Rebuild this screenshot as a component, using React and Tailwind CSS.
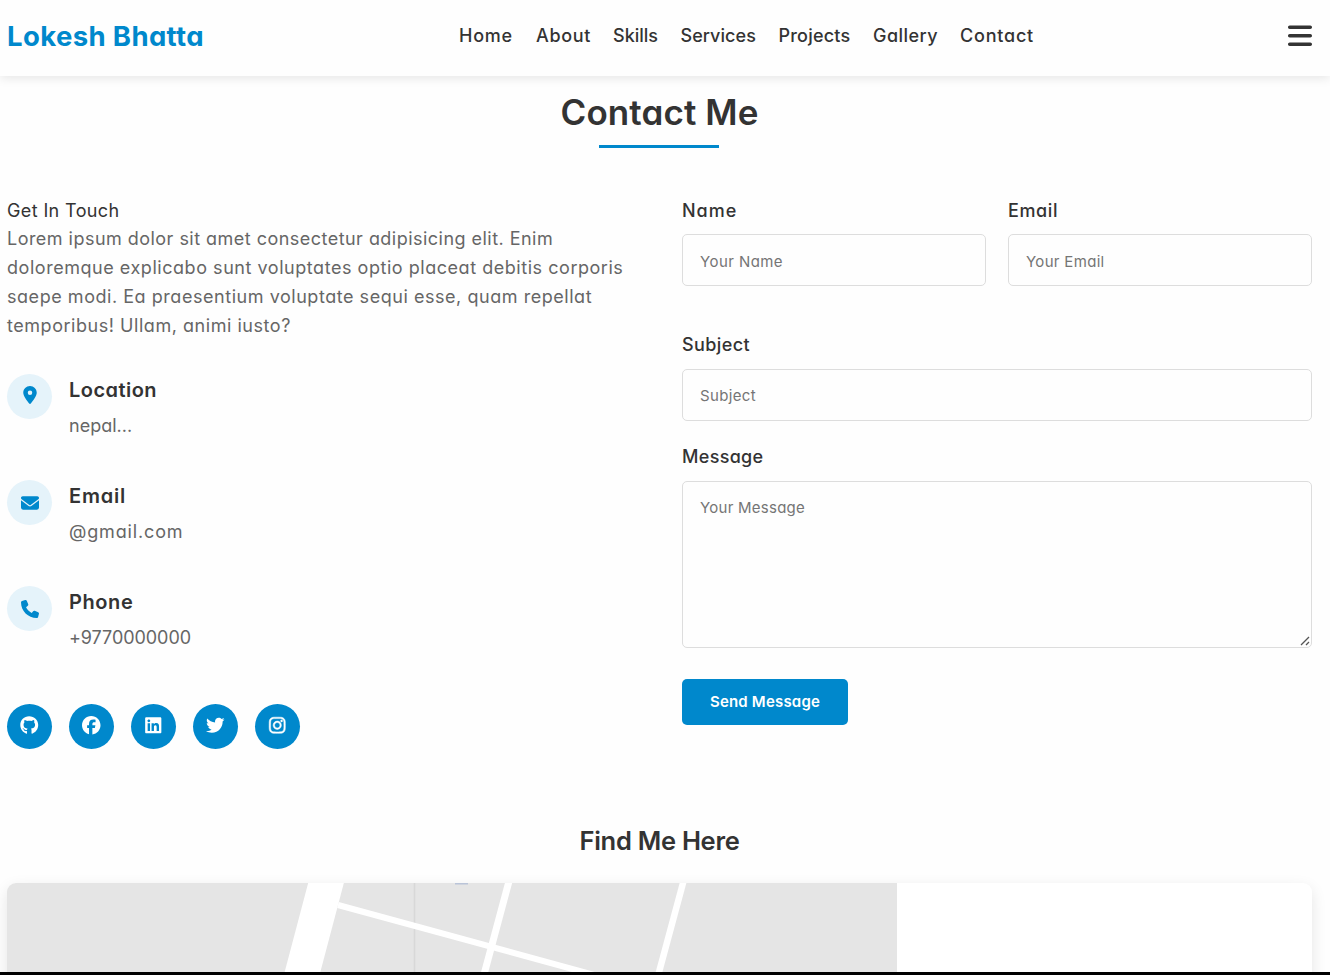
import React from "react";
import {
  FaBars,
  FaEnvelope,
  FaFacebook,
  FaGithub,
  FaInstagram,
  FaLinkedin,
  FaLocationDot,
  FaPhone,
  FaTwitter,
} from "react-icons/fa6";

const navLinks = [
  { label: "Home", className: "w-[54.5px] tracking-[0.75px]" },
  { label: "About", className: "w-[54.5px] tracking-[0.65px]" },
  { label: "Skills", className: "w-[45px]" },
  { label: "Services", className: "w-[75.5px] tracking-[0.06px]" },
  { label: "Projects", className: "w-[72px] tracking-[0.22px]" },
  { label: "Gallery", className: "w-[64.5px] tracking-[0.45px]" },
  { label: "Contact", className: "w-[74px] tracking-[0.78px]" },
];

const details = [
  { title: "Location", value: "nepal...", Icon: FaLocationDot, titleClass: "tracking-[0.46px]", valueClass: "", iconClass: "mb-[3px]" },
  { title: "Email", value: "@gmail.com", Icon: FaEnvelope, titleClass: "tracking-[0.78px]", valueClass: "tracking-[0.85px]", iconClass: "" },
  { title: "Phone", value: "+9770000000", Icon: FaPhone, titleClass: "tracking-[0.6px]", valueClass: "tracking-[-0.06px]", iconClass: "" },
];

const socials = [
  { name: "GitHub", Icon: FaGithub, iconClass: "" },
  { name: "Facebook", Icon: FaFacebook, iconClass: "" },
  { name: "LinkedIn", Icon: FaLinkedin, iconClass: "" },
  { name: "Twitter", Icon: FaTwitter, iconClass: "" },
  { name: "Instagram", Icon: FaInstagram, iconClass: "[stroke-width:14px] stroke-white" },
];

const fieldClass =
  "block w-full rounded-[5px] border border-[#dddddd] bg-[#fefefe] px-[17px] text-[15px] text-[#333] placeholder:text-[#757575] outline-none";

function Header() {
  return (
    <header className="relative z-10 flex h-[76px] shrink-0 items-center bg-[#fefefe] pr-[18px] pb-[4px] pl-[7px] shadow-[0_2px_10px_rgba(0,0,0,0.1)]">
      <div className="w-[452px] pt-[2px] text-[27.5px] font-bold tracking-[0.38px] text-[#0088cc]">Lokesh Bhatta</div>
      <nav className="flex gap-[22.5px] pb-[2px] text-[18px] font-medium">
        {navLinks.map((link) => (
          <a key={link.label} href="#" className={`whitespace-nowrap ${link.className}`}>
            {link.label}
          </a>
        ))}
      </nav>
      <button type="button" aria-label="Menu" className="ml-auto">
        <FaBars className="h-[27.5px] w-[24px]" />
      </button>
    </header>
  );
}

function ContactInfo() {
  return (
    <div className="w-[630px] pt-[1px]">
      <h3 className="text-[18px] leading-[28.8px] tracking-[0.38px]">Get In Touch</h3>
      <p className="text-[18px] leading-[28.8px] whitespace-nowrap text-[#666]">
        <span className="block tracking-[0.47px]">Lorem ipsum dolor sit amet consectetur adipisicing elit. Enim</span>
        <span className="block tracking-[0.54px]">doloremque explicabo sunt voluptates optio placeat debitis corporis</span>
        <span className="block tracking-[0.54px]">saepe modi. Ea praesentium voluptate sequi esse, quam repellat</span>
        <span className="block tracking-[0.54px]">temporibus! Ullam, animi iusto?</span>
      </p>
      <div className="mt-[34px]">
        {details.map(({ title, value, Icon, titleClass, valueClass, iconClass }) => (
          <div key={title} className="flex h-[106px] gap-[17px]">
            <div className="flex size-[45px] items-center justify-center rounded-full bg-[#e5f3fa] text-[18px] text-[#0088cc]">
              <Icon className={iconClass} />
            </div>
            <div>
              <h4 className={`text-[20px] leading-[32px] font-semibold ${titleClass}`}>{title}</h4>
              <p className={`mt-[5px] text-[18px] leading-[29px] text-[#666] ${valueClass}`}>{value}</p>
            </div>
          </div>
        ))}
      </div>
      <div className="mt-[11.5px] flex gap-[17px]">
        {socials.map(({ name, Icon, iconClass }) => (
          <a
            key={name}
            href="#"
            aria-label={name}
            className="flex size-[45px] items-center justify-center rounded-full bg-[#0088cc] pb-[2px] text-[18.5px] text-white"
          >
            <Icon className={iconClass} />
          </a>
        ))}
      </div>
    </div>
  );
}

function Label({ children, className }) {
  return <label className={`block text-[18px] leading-[29px] font-medium ${className}`}>{children}</label>;
}

function ContactForm() {
  return (
    <form className="w-[630px]">
      <div className="flex gap-[22px]">
        <div className="w-[304px]">
          <Label className="tracking-[1px]">Name</Label>
          <input className={`mt-[9.5px] h-[52px] pt-[2px] tracking-[0.43px] ${fieldClass}`} placeholder="Your Name" />
        </div>
        <div className="w-[304px]">
          <Label className="tracking-[0.6px]">Email</Label>
          <input className={`mt-[9.5px] h-[52px] pt-[2px] tracking-[0.32px] ${fieldClass}`} placeholder="Your Email" />
        </div>
      </div>
      <Label className="mt-[44px] tracking-[0.4px]">Subject</Label>
      <input className={`mt-[10px] h-[52px] tracking-[0.35px] ${fieldClass}`} placeholder="Subject" />
      <Label className="mt-[21px] tracking-[0.32px]">Message</Label>
      <div className="relative mt-[10px]">
        <textarea
          className={`h-[167px] resize-none py-[14px] leading-[23px] tracking-[0.25px] ${fieldClass}`}
          placeholder="Your Message"
        />
        <svg width="10" height="10" viewBox="0 0 10 10" className="absolute right-[2px] bottom-[2px]" fill="none" stroke="#555" strokeWidth="1.3">
          <path d="M1 9L9 1M6 9L9 6" />
        </svg>
      </div>
      <button
        type="button"
        className="mt-[31px] h-[45.5px] w-[166px] rounded-[5px] bg-[#0088cc] pt-[1px] text-[15px] font-semibold tracking-[0.2px] text-white"
      >
        Send Message
      </button>
    </form>
  );
}

function MapCard() {
  return (
    <div className="h-[400px] overflow-hidden rounded-[9px] bg-white shadow-[0_5px_15px_rgba(0,0,0,0.1)]">
      <svg width="890" height="400" viewBox="0 0 890 400" className="block">
        <rect width="890" height="400" fill="#e5e5e5" />
        <path d="M407.5 0V400" stroke="#d8d8d8" strokeWidth="1.5" />
        <g fill="none" stroke="#fff">
          <path d="M324.3 -20L212 405" strokeWidth="34.5" />
          <path d="M331 22L591 93" strokeWidth="6" />
          <path d="M506.9 -20L393 405" strokeWidth="7" />
          <path d="M681.4 -20L567 405" strokeWidth="6.5" />
        </g>
        <rect x="448" width="13" height="1.5" fill="#bac4d8" />
      </svg>
    </div>
  );
}

export default function App() {
  return (
    <div className="flex h-[975px] flex-col overflow-hidden bg-[#fefefe] font-['Inter',sans-serif] text-[#333] [font-feature-settings:'cv11'] [font-optical-sizing:none]">
      <Header />
      <main className="min-h-0 flex-1 overflow-hidden pr-[18px] pl-[7px]">
        <div className="flex flex-col items-center">
          <h2 className="mt-[8px] text-[35px] leading-[56px] font-semibold tracking-[0.1px]">Contact Me</h2>
          <div className="mt-[4.5px] mr-[1px] h-[3px] w-[120px] bg-[#0088cc]" />
        </div>
        <div className="mt-[48px] flex gap-[45px]">
          <ContactInfo />
          <ContactForm />
        </div>
        <h3 className="mt-[71.5px] mb-[22px] text-center text-[25.5px] leading-[41px] font-semibold tracking-[-0.28px]">
          Find Me Here
        </h3>
        <MapCard />
      </main>
      <div className="relative h-[3px] shrink-0 bg-black" />
    </div>
  );
}
